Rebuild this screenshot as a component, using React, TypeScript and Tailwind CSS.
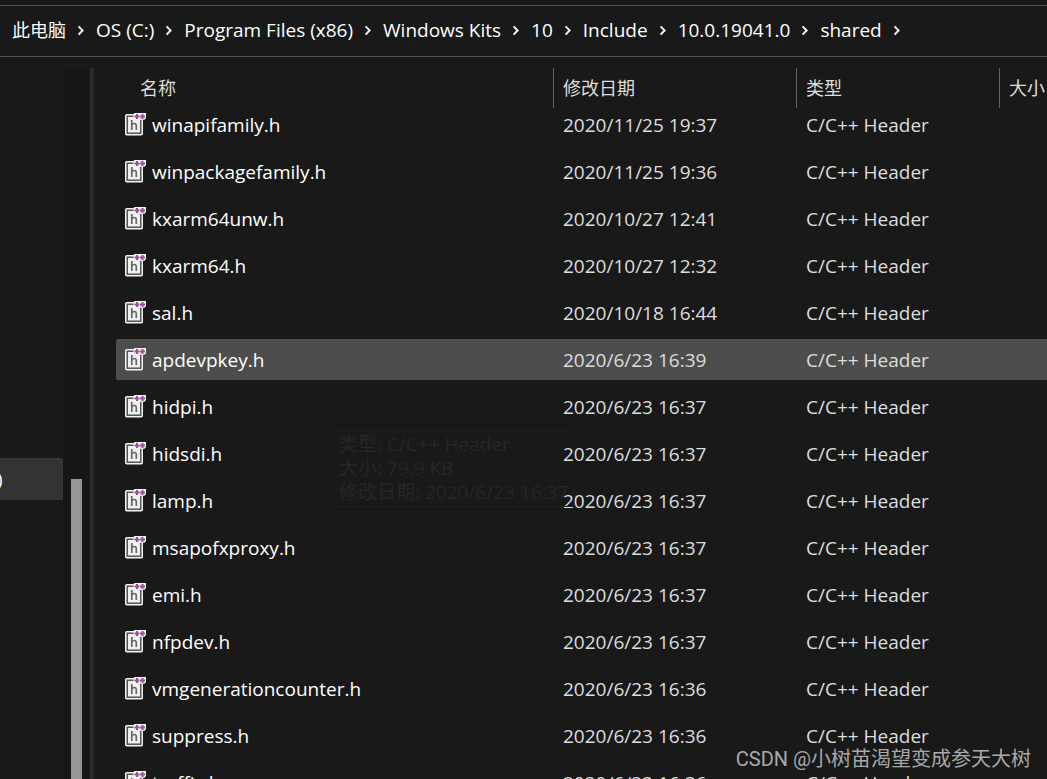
import clsx from 'clsx'

interface FileItem {
    name: string
    modified: string
    active?: boolean
}

const crumbs = [
    'OS (C:)',
    'Program Files (x86)',
    'Windows Kits',
    '10',
    'Include',
    '10.0.19041.0',
    'shared',
]

const files: FileItem[] = [
    { name: 'winapifamily.h', modified: '2020/11/25 19:37' },
    { name: 'winpackagefamily.h', modified: '2020/11/25 19:36' },
    { name: 'kxarm64unw.h', modified: '2020/10/27 12:41' },
    { name: 'kxarm64.h', modified: '2020/10/27 12:32' },
    { name: 'sal.h', modified: '2020/10/18 16:44' },
    { name: 'apdevpkey.h', modified: '2020/6/23 16:39', active: true },
    { name: 'hidpi.h', modified: '2020/6/23 16:37' },
    { name: 'hidsdi.h', modified: '2020/6/23 16:37' },
    { name: 'lamp.h', modified: '2020/6/23 16:37' },
    { name: 'msapofxproxy.h', modified: '2020/6/23 16:37' },
    { name: 'emi.h', modified: '2020/6/23 16:37' },
    { name: 'nfpdev.h', modified: '2020/6/23 16:37' },
    { name: 'vmgenerationcounter.h', modified: '2020/6/23 16:36' },
    { name: 'suppress.h', modified: '2020/6/23 16:36' },
    { name: 'traffic.h', modified: '2020/6/23 16:36' },
]

const columns = [
    { label: '名称', width: 'w-[437px]', inner: 'pl-6' },
    { label: '修改日期', width: 'w-[243px]', inner: 'border-l border-[#636363] pl-[9px]' },
    { label: '类型', width: 'w-[203px]', inner: 'border-l border-[#636363] pl-[9px]' },
    { label: '大小', width: '', inner: 'border-l border-[#636363] pl-[9px]' },
]

function Chevron() {
    return (
        <svg className="mx-[11px] w-2 h-3 shrink-0" viewBox="0 0 8 12" fill="none">
            <path d="M1.6 2.4 5.6 6.500 1.6 10.600" stroke="#f5f5f5" strokeWidth="2" />
        </svg>
    )
}

function HeaderIcon() {
    return (
        <svg className="w-[22px] h-[25px] shrink-0" viewBox="0 0 22 25" fill="none">
            <rect x="0" y="1" width="18" height="21.500" rx="1.8" fill="#f4f4f4" />
            <rect x="2.2" y="3.2" width="13.6" height="17" fill="#f0eff1" stroke="#484848" strokeWidth="1.4" />
            <path
                d="M6.800 7v10M6.800 12.200c.7-1.200 1.500-1.700 2.400-1.700 1.400 0 2.100.9 2.100 2.300V17"
                stroke="#686868"
                strokeWidth="1.700"
            />
            <path d="M9.500 0H21v5l-1.500 1.800h-9.500L8.500 5.200V1z" fill="#f4f4f4" />
            <path d="M12 .9v5M9.500 3.400h5M17.500.9v5M15 3.400h5" stroke="#9b4f96" strokeWidth="2" />
        </svg>
    )
}

function AddressBar() {
    return (
        <nav
            aria-label="地址栏"
            className="mt-[5px] h-[52px] shrink-0 flex items-center border-y border-[#535353] pb-[2px] pl-3 text-white whitespace-nowrap"
        >
            <a href="#" className="text-[18px] leading-6">
                此电脑
            </a>
            <Chevron />
            {crumbs.map((crumb) => (
                <span key={crumb} className="flex items-center">
                    <a href="#" className="leading-6">
                        {crumb}
                    </a>
                    <Chevron />
                </span>
            ))}
        </nav>
    )
}

function Sidebar() {
    return (
        <aside className="flex shrink-0 overflow-hidden">
            <div className="w-[63px] pt-[390px]">
                <button className="w-full h-[42px] flex items-center bg-[#333333] border border-l-0 border-[#383838] rounded-r-xs text-white overflow-hidden">
                    <span className="-ml-[3px] leading-6">)</span>
                </button>
            </div>
            <div className="w-[27px] bg-[#171717] pt-[411px] pl-2">
                <div className="w-[11px] h-full bg-[#979797]" />
            </div>
            <div className="w-[5px] bg-[#2b2b2b] border-r-2 border-[#202020]" />
        </aside>
    )
}

function FileTable() {
    return (
        <table className="w-full table-fixed border-collapse text-left whitespace-nowrap">
            <thead>
                <tr>
                    {columns.map((column) => (
                        <th key={column.label} className={clsx('p-0 font-normal', column.width)}>
                            <div className={clsx('flex items-center h-10 -mb-[6px]', column.inner)}>
                                <button className="text-[18px] leading-6 text-[#dedede]">
                                    {column.label}
                                </button>
                            </div>
                        </th>
                    ))}
                </tr>
            </thead>
            <tbody className="text-[#dedede]">
                {files.map((file) => {
                    const cell = clsx(
                        'h-[41px] mt-[2px] mb-1 pt-[2px] flex items-center',
                        file.active && 'bg-[#4d4d4d]'
                    )

                    return (
                        <tr key={file.name}>
                            <td className="p-0">
                                <div className={clsx(cell, 'pl-[9px] gap-[5px] rounded-l-xs text-white')}>
                                    <HeaderIcon />
                                    {file.name}
                                </div>
                            </td>
                            <td className="p-0">
                                <div className={clsx(cell, 'pl-[10px]')}>{file.modified}</div>
                            </td>
                            <td className="p-0">
                                <div className={clsx(cell, 'pl-[10px]')}>C/C++ Header</div>
                            </td>
                            <td className="p-0">
                                <div className={cell} />
                            </td>
                        </tr>
                    )
                })}
            </tbody>
        </table>
    )
}

function FileTooltip() {
    return (
        <div
            role="tooltip"
            className="absolute left-[238px] top-[362px] border border-[#1f1f1f] px-[5px] pt-px pb-[2px] leading-6 text-[#272727] whitespace-nowrap pointer-events-none"
        >
            <p>类型: C/C++ Header</p>
            <p>大小: 79.9 KB</p>
            <p>修改日期: 2020/6/23 16:37</p>
        </div>
    )
}

export default function App() {
    return (
        <div className="h-screen flex flex-col overflow-hidden relative bg-[#191919] text-[19px] font-['Open_Sans','Noto_Sans_CJK_SC',sans-serif]">
            <AddressBar />
            <div className="flex-1 min-h-0 flex pt-[11px]">
                <Sidebar />
                <main className="flex-1 min-w-0 relative pl-[21px] overflow-hidden">
                    <FileTable />
                    <FileTooltip />
                </main>
            </div>
            <p className="absolute right-4 bottom-2 text-[20px] leading-6 text-[#a9a9a9] font-['Roboto','Noto_Sans_CJK_SC',sans-serif]">
                CSDN @小树苗渴望变成参天大树
            </p>
        </div>
    )
}
